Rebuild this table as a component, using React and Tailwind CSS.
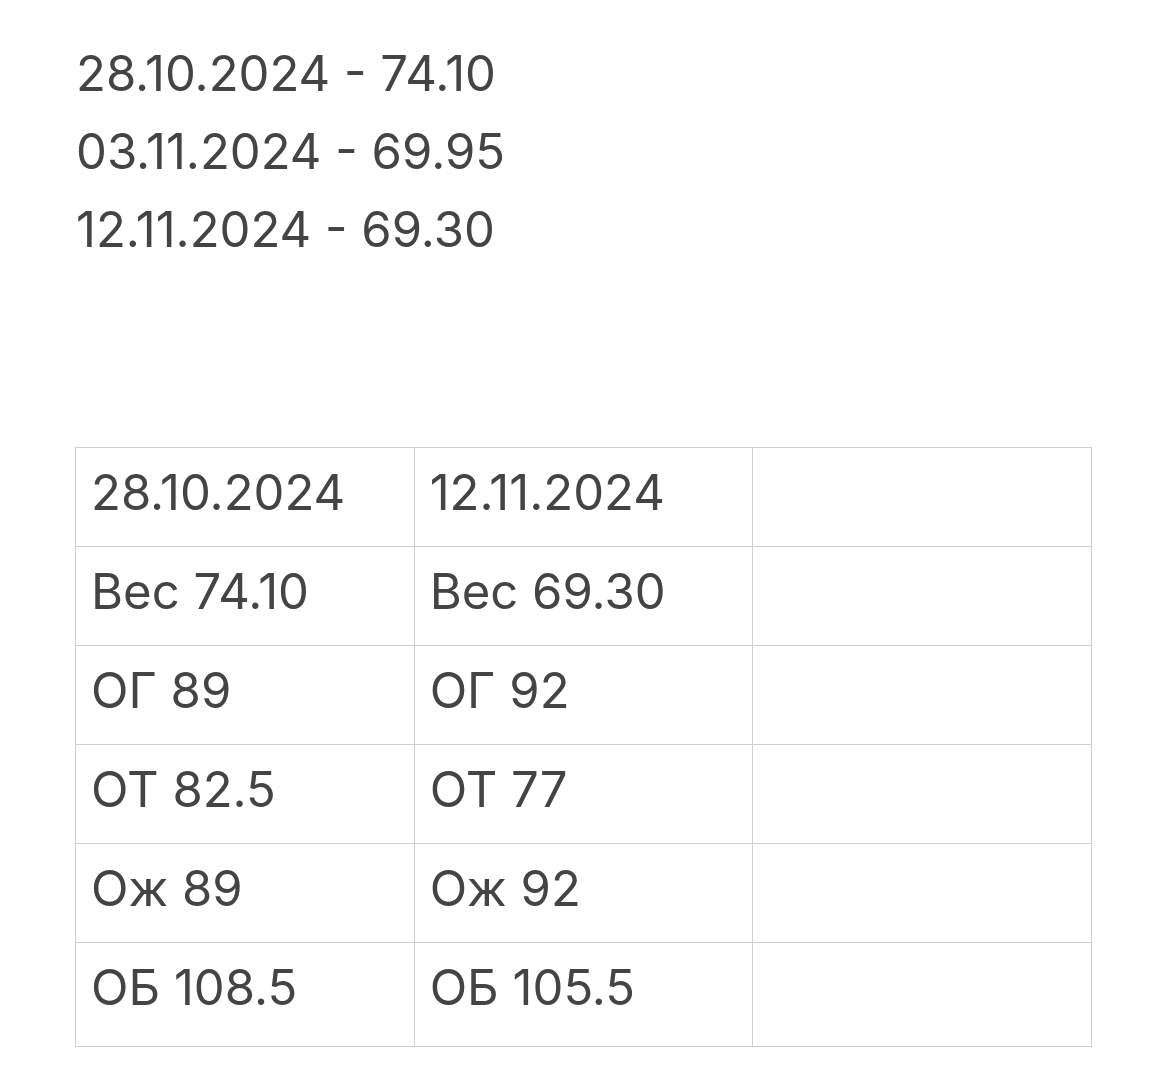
import React from 'react';

const lines = ['28.10.2024 - 74.10', '03.11.2024 - 69.95', '12.11.2024 - 69.30'];

const rows = [
    ['28.10.2024', '12.11.2024', ''],
    ['Вес 74.10', 'Вес 69.30', ''],
    ['ОГ 89', 'ОГ 92', ''],
    ['ОТ 82.5', 'ОТ 77', ''],
    ['Ож 89', 'Ож 92', ''],
    ['ОБ 108.5', 'ОБ 105.5', ''],
];

export default function App() {
    return (
        <div className="min-h-screen bg-white text-[#444444] pl-[76px] pt-[35px]" style={{ fontFamily: 'Inter, "Noto Sans", sans-serif' }}>
            {/* Notes */}
            <div className="text-[49px] leading-[78px]">
                {lines.map((l, i) => (
                    <p key={i}>{l}</p>
                ))}
            </div>

            {/* Measurements table */}
            <div className="mt-[178px] -ml-px w-[1017px] grid grid-cols-3 border-l border-t border-[#cfcfcf]">
                {rows.map((r, i) =>
                    r.map((c, j) => (
                        <div
                            key={`${i}-${j}`}
                            className={`border-r border-b border-[#cfcfcf] pl-[15px] pt-[15px] text-[49px] leading-[60px] ${i === rows.length - 1 ? 'h-[104px]' : 'h-[99px]'}`}
                        >
                            {c}
                        </div>
                    ))
                )}
            </div>
        </div>
    );
}
